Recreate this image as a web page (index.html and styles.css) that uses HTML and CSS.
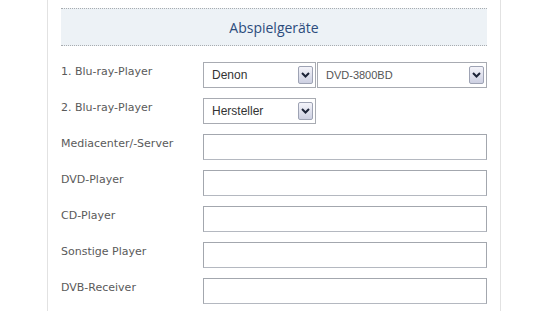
FILE: index.html
```html
<!DOCTYPE html>
<html lang="de">
<head>
<meta charset="utf-8">
<title>Abspielgeräte</title>
<link rel="stylesheet" href="styles.css">
</head>
<body>
<div class="panel">
  <div class="heading">Abspielgeräte</div>
  <div class="form">
    <div class="row">
      <div class="label">1. Blu-ray-Player</div>
      <div class="fields">
        <div class="select short"><span class="value">Denon</span><span class="arrow"><svg width="9" height="6" viewBox="0 0 9 6"><path d="M1 1 L4.5 4.5 L8 1" fill="none" stroke="#1d2438" stroke-width="2"/></svg></span></div>
        <div class="select long"><span class="value light">DVD-3800BD</span><span class="arrow"><svg width="9" height="6" viewBox="0 0 9 6"><path d="M1 1 L4.5 4.5 L8 1" fill="none" stroke="#1d2438" stroke-width="2"/></svg></span></div>
      </div>
    </div>
    <div class="row">
      <div class="label">2. Blu-ray-Player</div>
      <div class="fields">
        <div class="select short"><span class="value">Hersteller</span><span class="arrow"><svg width="9" height="6" viewBox="0 0 9 6"><path d="M1 1 L4.5 4.5 L8 1" fill="none" stroke="#1d2438" stroke-width="2"/></svg></span></div>
      </div>
    </div>
    <div class="row">
      <div class="label">Mediacenter/-Server</div>
      <div class="fields"><input class="text" type="text"></div>
    </div>
    <div class="row">
      <div class="label">DVD-Player</div>
      <div class="fields"><input class="text" type="text"></div>
    </div>
    <div class="row">
      <div class="label">CD-Player</div>
      <div class="fields"><input class="text" type="text"></div>
    </div>
    <div class="row">
      <div class="label">Sonstige Player</div>
      <div class="fields"><input class="text" type="text"></div>
    </div>
    <div class="row">
      <div class="label">DVB-Receiver</div>
      <div class="fields"><input class="text" type="text"></div>
    </div>
  </div>
</div>
</body>
</html>
```

FILE: styles.css
```css
html, body {
  margin: 0;
  padding: 0;
  background: #ffffff;
}

body {
  font-family: "DejaVu Sans", sans-serif;
}

.panel {
  margin-left: 47px;
  width: 426px;
  min-height: 311px;
  border-left: 1px solid #e2e2e2;
  border-right: 1px solid #e2e2e2;
  padding: 8px 13px 0 13px;
  box-sizing: content-box;
}

.heading {
  height: 35px;
  border-top: 1px dotted #a8acb0;
  border-bottom: 1px dotted #a8acb0;
  background: #edf2f6;
  display: flex;
  align-items: center;
  justify-content: center;
  font-family: "Open Sans", sans-serif;
  font-size: 14px;
  color: #2c4c7c;
  padding-top: 1px;
  box-sizing: content-box;
}

.form {
  margin-top: 16px;
  display: flex;
  flex-direction: column;
  gap: 10px;
}

.row {
  display: flex;
  align-items: flex-start;
}

.label {
  width: 142px;
  flex: none;
  font-size: 11px;
  color: #5a5a5a;
  padding-top: 3px;
  line-height: 14px;
}

.fields {
  display: flex;
  gap: 1px;
  flex: 1;
}

.select {
  height: 26px;
  box-sizing: border-box;
  border: 1px solid #a8abb2;
  background: #fff;
  display: flex;
  align-items: center;
  justify-content: space-between;
  padding: 0 2px 0 8px;
  font-family: "Liberation Sans", Arial, sans-serif;
  font-size: 12px;
  color: #333;
}

.select.short {
  width: 113px;
}

.select.long {
  flex: 1;
}

.value.light {
  font-size: 11px;
  color: #555;
}

.arrow {
  width: 15px;
  height: 18px;
  box-sizing: border-box;
  border: 1px solid #9ea3b4;
  border-radius: 2px;
  background: linear-gradient(#f4f4fa, #cdd0e2);
  display: flex;
  align-items: center;
  justify-content: center;
}

.text {
  flex: 1;
  height: 26px;
  box-sizing: border-box;
  margin: 0;
  border: 1px solid #a3a7ae;
  border-bottom-color: #b4b8c0;
  background: #fff;
  padding: 0 4px;
  outline: none;
}
```
